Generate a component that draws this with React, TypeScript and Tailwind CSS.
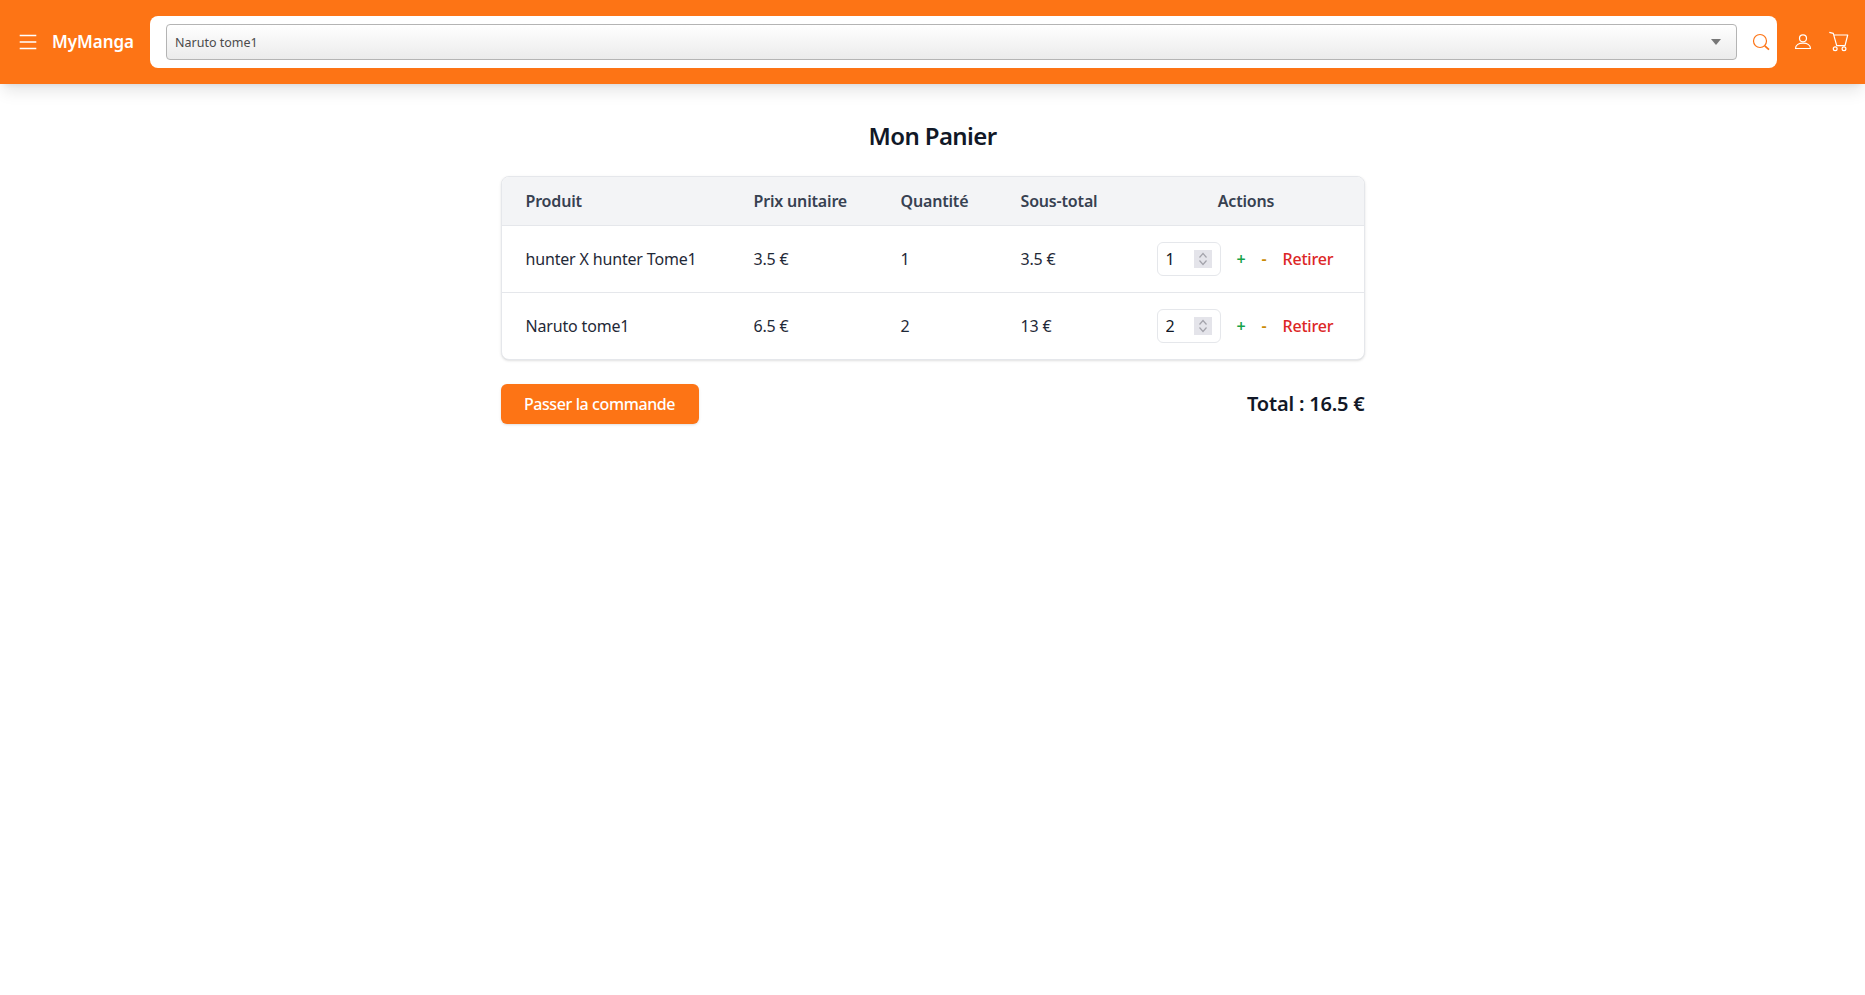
const items = [
  { id: 1, name: "hunter X hunter Tome1", price: "3.5 €", qty: 1, subtotal: "3.5 €" },
  { id: 2, name: "Naruto tome1", price: "6.5 €", qty: 2, subtotal: "13 €" },
];

function MenuIcon() {
  return (
    <svg viewBox="0 0 24 24" fill="none" stroke="currentColor" strokeWidth="1.3" className="w-6 h-6 shrink-0">
      <path d="M3.7 5.5h16.6M3.7 12h16.6M3.7 18.5h16.6" />
    </svg>
  );
}

function SearchIcon() {
  return (
    <svg viewBox="0 0 18 18" fill="none" stroke="currentColor" className="ml-[15px] w-[18px] h-[18px] shrink-0 text-[#fd7415]">
      <circle cx="8" cy="8" r="6.5" strokeWidth="1.2" />
      <path d="M12.8 12.8L17 16.7" strokeWidth="1.7" />
    </svg>
  );
}

function UserIcon() {
  return (
    <svg viewBox="0 0 18 18" fill="none" stroke="currentColor" strokeWidth="1.2" className="ml-[17px] w-[18px] h-[18px] shrink-0">
      <circle cx="9" cy="5.3" r="3.5" />
      <path d="M1.5 15.5C1.5 12 5 10.2 9 10.2C13 10.2 16.5 12 16.5 15.5Z" strokeLinejoin="round" />
    </svg>
  );
}

function CartIcon() {
  return (
    <svg viewBox="0 0 22 22" fill="none" stroke="currentColor" strokeWidth="1.2" className="ml-4 w-[22px] h-[22px] shrink-0">
      <path d="M1.3 1.3L5.3 2.3L8.7 14.7H17L19.7 4H5.7" strokeLinejoin="round" />
      <circle cx="7.2" cy="17.7" r="1.9" />
      <circle cx="16" cy="17.7" r="1.9" />
    </svg>
  );
}

function Header() {
  return (
    <header className="h-[84px] bg-[#fd7415] shadow-lg flex items-center pl-4 pr-[15px] text-white">
      <MenuIcon />
      <span className="ml-3 w-[84px] pb-[2px] text-[17px] font-semibold leading-none tracking-[-0.05px]">MyManga</span>
      <div className="ml-[14px] flex-1 h-[52px] bg-white rounded-lg flex items-center pl-4 pr-[7px]">
        <div className="flex-1 h-9 rounded-[4px] border border-[#b4b4b4] bg-gradient-to-b from-white to-[#ebebeb] flex items-center pl-2 pr-[15px]">
          <span className="flex-1 pt-[2px] text-[12.5px] text-[#4b4b4b]">Naruto tome1</span>
          <span className="w-0 h-0 border-x-[5px] border-x-transparent border-t-[6px] border-t-[#777777]" />
        </div>
        <SearchIcon />
      </div>
      <UserIcon />
      <CartIcon />
    </header>
  );
}

function QtyInput({ value }: { value: number }) {
  return (
    <div className="relative w-16 h-[34px]">
      <input
        type="number"
        defaultValue={value}
        className="w-full h-full border border-[#e5e7eb] rounded-md px-2 text-[#111827] appearance-none [&::-webkit-inner-spin-button]:appearance-none"
      />
      <span className="absolute right-[9px] top-2 w-[18px] h-[18px] bg-[#e4e4ea] pointer-events-none">
        <svg viewBox="0 0 18 18" fill="none" stroke="#a3a3ab" strokeWidth="1.2" className="w-full h-full">
          <path d="M5.5 7.5L9 3.5L12.5 7.5M5.5 10.5L9 14.5L12.5 10.5" />
        </svg>
      </span>
    </div>
  );
}

export default function App() {
  return (
    <div className="min-h-[995px] bg-white font-['Noto_Sans',sans-serif]">
      <Header />
      <main className="max-w-4xl mx-auto px-4 pt-9">
        <h1 className="text-2xl font-semibold tracking-[-0.6px] text-[#111827] text-center leading-8 mb-6">Mon Panier</h1>
        <div className="bg-white border border-[#e5e7eb] rounded-lg shadow-sm overflow-hidden">
          <table className="w-full table-fixed text-left text-base tracking-[-0.17px]">
            <colgroup>
              <col className="w-[228px]" />
              <col className="w-[147px]" />
              <col className="w-[120px]" />
              <col className="w-[136px]" />
              <col />
            </colgroup>
            <thead className="bg-[#f3f4f6] text-[#374151]">
              <tr className="h-12 border-b border-[#e5e7eb]">
                <th className="px-6 font-semibold">Produit</th>
                <th className="px-6 font-semibold">Prix unitaire</th>
                <th className="px-6 font-semibold">Quantité</th>
                <th className="px-6 font-semibold">Sous-total</th>
                <th className="pl-6 pr-7 font-semibold text-center">Actions</th>
              </tr>
            </thead>
            <tbody className="text-[#1f2937]">
              {items.map((item) => (
                <tr key={item.id} className="h-[67px] border-b border-[#e5e7eb] last:border-b-0">
                  <td className="px-6">{item.name}</td>
                  <td className="px-6">{item.price}</td>
                  <td className="px-6">{item.qty}</td>
                  <td className="px-6">{item.subtotal}</td>
                  <td className="px-6">
                    <div className="flex items-center">
                      <QtyInput value={item.qty} />
                      <button className="ml-4 text-[#16a34a] font-semibold">+</button>
                      <button className="ml-4 text-[#ca8a04] font-semibold">-</button>
                      <button className="ml-4 text-[#dc2626] font-medium">Retirer</button>
                    </div>
                  </td>
                </tr>
              ))}
            </tbody>
          </table>
        </div>
        <div className="mt-6 flex items-center justify-between">
          <button className="h-10 w-[198px] bg-[#fd7415] text-white rounded-md shadow-sm font-medium tracking-[-0.4px]">Passer la commande</button>
          <span className="text-xl font-semibold tracking-[-0.2px] text-[#111827]">Total : 16.5 €</span>
        </div>
      </main>
    </div>
  );
}
